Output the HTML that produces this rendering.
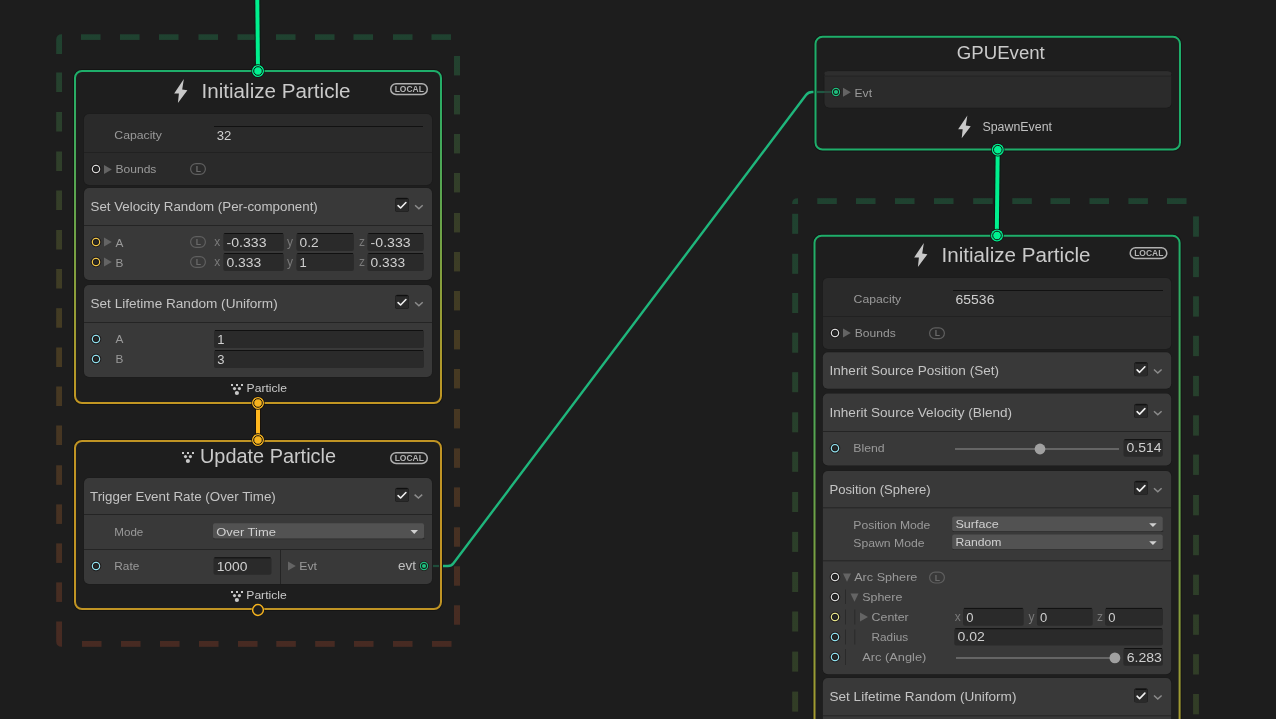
<!DOCTYPE html>
<html><head><meta charset="utf-8"><style>
html,body{margin:0;padding:0;width:1276px;height:719px;overflow:hidden;background:#1d1d1d;font-family:"Liberation Sans",sans-serif;}
</style></head><body>
<svg width="1276" height="719" viewBox="0 0 1276 719" style="position:absolute;left:0;top:0;will-change:transform" font-family="Liberation Sans, sans-serif"><defs><linearGradient id="sysL" gradientUnits="userSpaceOnUse" x1="0" y1="34" x2="0" y2="647">
<stop offset="0" stop-color="#1f4230"/><stop offset="0.5" stop-color="#463b22"/><stop offset="1" stop-color="#472a22"/></linearGradient><linearGradient id="sysR" gradientUnits="userSpaceOnUse" x1="0" y1="198" x2="0" y2="712">
<stop offset="0" stop-color="#1f4230"/><stop offset="1" stop-color="#323d26"/></linearGradient><linearGradient id="brdL" gradientUnits="userSpaceOnUse" x1="0" y1="71" x2="0" y2="403">
<stop offset="0" stop-color="#1eae6a"/><stop offset="1" stop-color="#c29622"/></linearGradient><linearGradient id="brdR" gradientUnits="userSpaceOnUse" x1="0" y1="235" x2="0" y2="822">
<stop offset="0" stop-color="#1eae6a"/><stop offset="1" stop-color="#c29622"/></linearGradient></defs><rect width="1276" height="719" fill="#1d1d1d"/><rect x="81" y="34.3" width="19.5" height="5.6" rx="0" fill="url(#sysL)" />
<rect x="120" y="34.3" width="19.5" height="5.6" rx="0" fill="url(#sysL)" />
<rect x="159" y="34.3" width="19.5" height="5.6" rx="0" fill="url(#sysL)" />
<rect x="198.5" y="34.3" width="19.5" height="5.6" rx="0" fill="url(#sysL)" />
<rect x="237.5" y="34.3" width="19.5" height="5.6" rx="0" fill="url(#sysL)" />
<rect x="276" y="34.3" width="19.5" height="5.6" rx="0" fill="url(#sysL)" />
<rect x="315" y="34.3" width="19.5" height="5.6" rx="0" fill="url(#sysL)" />
<rect x="353.5" y="34.3" width="19.5" height="5.6" rx="0" fill="url(#sysL)" />
<rect x="393" y="34.3" width="19.5" height="5.6" rx="0" fill="url(#sysL)" />
<rect x="431.5" y="34.3" width="19.5" height="5.6" rx="0" fill="url(#sysL)" />
<rect x="454" y="56" width="6" height="19.4" rx="0" fill="url(#sysL)" />
<rect x="454" y="95" width="6" height="19.4" rx="0" fill="url(#sysL)" />
<rect x="454" y="134" width="6" height="19.4" rx="0" fill="url(#sysL)" />
<rect x="454" y="173" width="6" height="19.4" rx="0" fill="url(#sysL)" />
<rect x="454" y="213" width="6" height="19.4" rx="0" fill="url(#sysL)" />
<rect x="454" y="252" width="6" height="19.4" rx="0" fill="url(#sysL)" />
<rect x="454" y="291" width="6" height="19.4" rx="0" fill="url(#sysL)" />
<rect x="454" y="330" width="6" height="19.4" rx="0" fill="url(#sysL)" />
<rect x="454" y="369" width="6" height="19.4" rx="0" fill="url(#sysL)" />
<rect x="454" y="409" width="6" height="19.4" rx="0" fill="url(#sysL)" />
<rect x="454" y="448.4" width="6" height="19.4" rx="0" fill="url(#sysL)" />
<rect x="454" y="487.4" width="6" height="19.4" rx="0" fill="url(#sysL)" />
<rect x="454" y="527.3" width="6" height="19.4" rx="0" fill="url(#sysL)" />
<rect x="454" y="566.3" width="6" height="19.4" rx="0" fill="url(#sysL)" />
<rect x="454" y="605.3" width="6" height="19.4" rx="0" fill="url(#sysL)" />
<rect x="82" y="641" width="19.5" height="5.8" rx="0" fill="url(#sysL)" />
<rect x="121" y="641" width="19.5" height="5.8" rx="0" fill="url(#sysL)" />
<rect x="160" y="641" width="19.5" height="5.8" rx="0" fill="url(#sysL)" />
<rect x="199" y="641" width="19.5" height="5.8" rx="0" fill="url(#sysL)" />
<rect x="238" y="641" width="19.5" height="5.8" rx="0" fill="url(#sysL)" />
<rect x="276.3" y="641" width="19.5" height="5.8" rx="0" fill="url(#sysL)" />
<rect x="315.2" y="641" width="19.5" height="5.8" rx="0" fill="url(#sysL)" />
<rect x="354" y="641" width="19.5" height="5.8" rx="0" fill="url(#sysL)" />
<rect x="393" y="641" width="19.5" height="5.8" rx="0" fill="url(#sysL)" />
<rect x="432" y="641" width="19.5" height="5.8" rx="0" fill="url(#sysL)" />
<rect x="56.2" y="72.5" width="5.8" height="19.5" rx="0" fill="url(#sysL)" />
<rect x="56.2" y="112" width="5.8" height="19.5" rx="0" fill="url(#sysL)" />
<rect x="56.2" y="151.5" width="5.8" height="19.5" rx="0" fill="url(#sysL)" />
<rect x="56.2" y="190.5" width="5.8" height="19.5" rx="0" fill="url(#sysL)" />
<rect x="56.2" y="230" width="5.8" height="19.5" rx="0" fill="url(#sysL)" />
<rect x="56.2" y="269" width="5.8" height="19.5" rx="0" fill="url(#sysL)" />
<rect x="56.2" y="308.2" width="5.8" height="19.5" rx="0" fill="url(#sysL)" />
<rect x="56.2" y="347.5" width="5.8" height="19.5" rx="0" fill="url(#sysL)" />
<rect x="56.2" y="386.5" width="5.8" height="19.5" rx="0" fill="url(#sysL)" />
<rect x="56.2" y="425.5" width="5.8" height="19.5" rx="0" fill="url(#sysL)" />
<rect x="56.2" y="465.3" width="5.8" height="19.5" rx="0" fill="url(#sysL)" />
<rect x="56.2" y="504.4" width="5.8" height="19.5" rx="0" fill="url(#sysL)" />
<rect x="56.2" y="543.4" width="5.8" height="19.5" rx="0" fill="url(#sysL)" />
<rect x="56.2" y="582.4" width="5.8" height="19.5" rx="0" fill="url(#sysL)" />
<path d="M56.2,54 L56.2,40 Q56.2,34.3 62,34.3 L62,54 Z" fill="url(#sysL)" stroke="none" stroke-width="1" />
<path d="M56.2,621.5 L56.2,641 Q56.2,646.8 62,646.8 L62,621.5 Z" fill="url(#sysL)" stroke="none" stroke-width="1" />
<rect x="817.3" y="198.2" width="19.5" height="5.8" rx="0" fill="url(#sysR)" />
<rect x="856" y="198.2" width="19.5" height="5.8" rx="0" fill="url(#sysR)" />
<rect x="895" y="198.2" width="19.5" height="5.8" rx="0" fill="url(#sysR)" />
<rect x="934" y="198.2" width="19.5" height="5.8" rx="0" fill="url(#sysR)" />
<rect x="973.2" y="198.2" width="19.5" height="5.8" rx="0" fill="url(#sysR)" />
<rect x="1012.3" y="198.2" width="19.5" height="5.8" rx="0" fill="url(#sysR)" />
<rect x="1050.5" y="198.2" width="19.5" height="5.8" rx="0" fill="url(#sysR)" />
<rect x="1089.5" y="198.2" width="19.5" height="5.8" rx="0" fill="url(#sysR)" />
<rect x="1128.4" y="198.2" width="19.5" height="5.8" rx="0" fill="url(#sysR)" />
<rect x="1167" y="198.2" width="19.5" height="5.8" rx="0" fill="url(#sysR)" />
<path d="M792.2,204 L792.2,203 Q792.2,198.2 798,198.2 L798,204 Z" fill="url(#sysR)" stroke="none" stroke-width="1" />
<rect x="792.2" y="213.8" width="5.9" height="20" rx="0" fill="url(#sysR)" />
<rect x="792.2" y="253.8" width="5.9" height="20" rx="0" fill="url(#sysR)" />
<rect x="792.2" y="293" width="5.9" height="20" rx="0" fill="url(#sysR)" />
<rect x="792.2" y="332.7" width="5.9" height="20" rx="0" fill="url(#sysR)" />
<rect x="792.2" y="372.2" width="5.9" height="20" rx="0" fill="url(#sysR)" />
<rect x="792.2" y="412.3" width="5.9" height="20" rx="0" fill="url(#sysR)" />
<rect x="792.2" y="451.8" width="5.9" height="20" rx="0" fill="url(#sysR)" />
<rect x="792.2" y="492" width="5.9" height="20" rx="0" fill="url(#sysR)" />
<rect x="792.2" y="531.9" width="5.9" height="20" rx="0" fill="url(#sysR)" />
<rect x="792.2" y="572" width="5.9" height="20" rx="0" fill="url(#sysR)" />
<rect x="792.2" y="611.5" width="5.9" height="20" rx="0" fill="url(#sysR)" />
<rect x="792.2" y="651.6" width="5.9" height="20" rx="0" fill="url(#sysR)" />
<rect x="792.2" y="691.6" width="5.9" height="20" rx="0" fill="url(#sysR)" />
<rect x="1193.1" y="216.4" width="5.8" height="20.3" rx="0" fill="url(#sysR)" />
<rect x="1193.1" y="256.8" width="5.8" height="20.3" rx="0" fill="url(#sysR)" />
<rect x="1193.1" y="296.3" width="5.8" height="20.3" rx="0" fill="url(#sysR)" />
<rect x="1193.1" y="335.8" width="5.8" height="20.3" rx="0" fill="url(#sysR)" />
<rect x="1193.1" y="375.9" width="5.8" height="20.3" rx="0" fill="url(#sysR)" />
<rect x="1193.1" y="415.3" width="5.8" height="20.3" rx="0" fill="url(#sysR)" />
<rect x="1193.1" y="454.6" width="5.8" height="20.3" rx="0" fill="url(#sysR)" />
<rect x="1193.1" y="495" width="5.8" height="20.3" rx="0" fill="url(#sysR)" />
<rect x="1193.1" y="534.9" width="5.8" height="20.3" rx="0" fill="url(#sysR)" />
<rect x="1193.1" y="574.7" width="5.8" height="20.3" rx="0" fill="url(#sysR)" />
<rect x="1193.1" y="614.5" width="5.8" height="20.3" rx="0" fill="url(#sysR)" />
<rect x="1193.1" y="654.2" width="5.8" height="20.3" rx="0" fill="url(#sysR)" />
<rect x="1193.1" y="694" width="5.8" height="20.3" rx="0" fill="url(#sysR)" />
<path d="M440,566 L448,566 Q451.5,566 453.5,563.2 L806,95 Q808.3,92 812,92 L816,92" fill="none" stroke="#1fb67c" stroke-width="2.4" />
<line x1="257.3" y1="0" x2="258" y2="71" stroke="#0a1a12" stroke-width="6" />
<line x1="257.3" y1="0" x2="258" y2="71" stroke="#00f08e" stroke-width="4" />
<line x1="997.7" y1="150" x2="996.8" y2="235" stroke="#0a1a12" stroke-width="6" />
<line x1="997.7" y1="150" x2="996.8" y2="235" stroke="#00f08e" stroke-width="4" />
<line x1="258" y1="403" x2="258" y2="440" stroke="#1a1208" stroke-width="6" />
<line x1="258" y1="403" x2="258" y2="440" stroke="#ffb71e" stroke-width="4" />
<rect x="75" y="71" width="366" height="332" rx="7" fill="#1e1e1e" stroke="#141414" stroke-width="4"/>
<rect x="75" y="71" width="366" height="332" rx="7" fill="#1e1e1e" stroke="url(#brdL)" stroke-width="2"/>
<polygon points="183.85,79.0 174.15,93.4 178.9,93.6 177.9,103.0 187.4,90.3 182.2,89.6" fill="#c8c8c8"/>
<text x="201.5" y="98.4" font-size="19.3" fill="#cacaca" textLength="149" lengthAdjust="spacingAndGlyphs" text-anchor="start" >Initialize Particle</text>
<rect x="390.75" y="83.75" width="36.5" height="10.7" rx="5.3" fill="none" stroke="#b0b0b0" stroke-width="1.5"/>
<text x="394.7" y="92.0" font-size="8.3" fill="#b4b4b4" font-weight="bold" textLength="29.2" lengthAdjust="spacingAndGlyphs" text-anchor="start" >LOCAL</text>
<rect x="83.5" y="113.5" width="349" height="72" rx="5.5" fill="#1a1a1a"/>
<rect x="84" y="114" width="348" height="71" rx="5" fill="#2a2a2a" />
<line x1="84" y1="152.5" x2="432" y2="152.5" stroke="#212121" stroke-width="1" />
<text x="114.3" y="139.2" font-size="11.8" fill="#9a9a9a" textLength="47.6" lengthAdjust="spacingAndGlyphs" text-anchor="start" >Capacity</text>
<rect x="214" y="126" width="209" height="1" rx="0" fill="#111111" />
<text x="216.8" y="139.6" font-size="13" fill="#d0d0d0" textLength="14.6" lengthAdjust="spacingAndGlyphs" text-anchor="start" >32</text>
<circle cx="96" cy="169" r="4.8" fill="none" stroke="#161212" stroke-width="0.9"/>
<circle cx="96" cy="169" r="3.6" fill="#282828" stroke="#d8d8d8" stroke-width="1.3"/>
<circle cx="96" cy="169" r="2.55" fill="none" stroke="#141414" stroke-width="0.8"/>
<polygon points="104,165 111.8,169.5 104,174" fill="#646464"/>
<text x="115.5" y="173" font-size="11.8" fill="#9a9a9a" textLength="40.9" lengthAdjust="spacingAndGlyphs" text-anchor="start" >Bounds</text>
<rect x="190.6" y="163.6" width="14.8" height="10.8" rx="5.4" fill="none" stroke="#5f5f5f" stroke-width="1.2"/>
<text x="198.3" y="172.0" font-size="8.6" fill="#6a6a6a" font-weight="bold" text-anchor="middle" >L</text>
<rect x="83.5" y="187.5" width="349" height="93" rx="5.5" fill="#1a1a1a"/>
<rect x="84" y="188" width="348" height="92" rx="5" fill="#393939" />
<line x1="84" y1="225.5" x2="432" y2="225.5" stroke="#242424" stroke-width="1" />
<text x="90.5" y="211.2" font-size="13" fill="#c4c4c4" textLength="227.3" lengthAdjust="spacingAndGlyphs" text-anchor="start" >Set Velocity Random (Per-component)</text>
<rect x="395.0" y="197.7" width="14" height="14.2" rx="2.5" fill="#1c1c1c" />
<rect x="395.5" y="198.2" width="13" height="13.4" rx="2" fill="#2a2a2a" />
<rect x="396.5" y="198.2" width="11" height="1" rx="0" fill="#0c0c0c" />
<path d="M398.1,205.6 L400.6,208.0 L405.9,202.5" fill="none" stroke="#f0f0f0" stroke-width="1.6" stroke-linecap="round" stroke-linejoin="round"/>
<path d="M415.1,205.2 L418.90000000000003,208.7 L422.70000000000005,205.2" fill="none" stroke="#8c8c8c" stroke-width="1.5" />
<circle cx="96" cy="242" r="4.8" fill="none" stroke="#161212" stroke-width="0.9"/>
<circle cx="96" cy="242" r="3.6" fill="#282828" stroke="#f2c544" stroke-width="1.3"/>
<circle cx="96" cy="242" r="2.55" fill="none" stroke="#141414" stroke-width="0.8"/>
<polygon points="104,237.5 111.8,242.0 104,246.5" fill="#646464"/>
<text x="115.5" y="246.5" font-size="11.8" fill="#9a9a9a" text-anchor="start" >A</text>
<rect x="190.6" y="236.6" width="14.8" height="10.8" rx="5.4" fill="none" stroke="#5f5f5f" stroke-width="1.2"/>
<text x="198.3" y="245.0" font-size="8.6" fill="#6a6a6a" font-weight="bold" text-anchor="middle" >L</text>
<text x="214.3" y="246.2" font-size="12" fill="#7a7a7a" text-anchor="start" >x</text>
<rect x="223.3" y="233" width="60.5" height="18" rx="2" fill="#2a2a2a" />
<rect x="224.3" y="233" width="58.5" height="1" rx="0" fill="#101010" />
<text x="226.5" y="246.7" font-size="13" fill="#d0d0d0" textLength="40" lengthAdjust="spacingAndGlyphs" text-anchor="start" >-0.333</text>
<text x="287" y="246.2" font-size="12" fill="#7a7a7a" text-anchor="start" >y</text>
<rect x="296.4" y="233" width="57.5" height="18" rx="2" fill="#2a2a2a" />
<rect x="297.4" y="233" width="55.5" height="1" rx="0" fill="#101010" />
<text x="299.59999999999997" y="246.7" font-size="13" fill="#d0d0d0" textLength="19.1" lengthAdjust="spacingAndGlyphs" text-anchor="start" >0.2</text>
<text x="359" y="246.2" font-size="12" fill="#7a7a7a" text-anchor="start" >z</text>
<rect x="367.4" y="233" width="56.5" height="18" rx="2" fill="#2a2a2a" />
<rect x="368.4" y="233" width="54.5" height="1" rx="0" fill="#101010" />
<text x="370.59999999999997" y="246.7" font-size="13" fill="#d0d0d0" textLength="40" lengthAdjust="spacingAndGlyphs" text-anchor="start" >-0.333</text>
<circle cx="96" cy="262" r="4.8" fill="none" stroke="#161212" stroke-width="0.9"/>
<circle cx="96" cy="262" r="3.6" fill="#282828" stroke="#f2c544" stroke-width="1.3"/>
<circle cx="96" cy="262" r="2.55" fill="none" stroke="#141414" stroke-width="0.8"/>
<polygon points="104,257.5 111.8,262.0 104,266.5" fill="#646464"/>
<text x="115.5" y="266.5" font-size="11.8" fill="#9a9a9a" text-anchor="start" >B</text>
<rect x="190.6" y="256.6" width="14.8" height="10.8" rx="5.4" fill="none" stroke="#5f5f5f" stroke-width="1.2"/>
<text x="198.3" y="265.0" font-size="8.6" fill="#6a6a6a" font-weight="bold" text-anchor="middle" >L</text>
<text x="214.3" y="266.2" font-size="12" fill="#7a7a7a" text-anchor="start" >x</text>
<rect x="223.3" y="253" width="60.5" height="18" rx="2" fill="#2a2a2a" />
<rect x="224.3" y="253" width="58.5" height="1" rx="0" fill="#101010" />
<text x="226.5" y="266.7" font-size="13" fill="#d0d0d0" textLength="34.8" lengthAdjust="spacingAndGlyphs" text-anchor="start" >0.333</text>
<text x="287" y="266.2" font-size="12" fill="#7a7a7a" text-anchor="start" >y</text>
<rect x="296.4" y="253" width="57.5" height="18" rx="2" fill="#2a2a2a" />
<rect x="297.4" y="253" width="55.5" height="1" rx="0" fill="#101010" />
<text x="299.59999999999997" y="266.7" font-size="13" fill="#d0d0d0" text-anchor="start" >1</text>
<text x="359" y="266.2" font-size="12" fill="#7a7a7a" text-anchor="start" >z</text>
<rect x="367.4" y="253" width="56.5" height="18" rx="2" fill="#2a2a2a" />
<rect x="368.4" y="253" width="54.5" height="1" rx="0" fill="#101010" />
<text x="370.59999999999997" y="266.7" font-size="13" fill="#d0d0d0" textLength="34.5" lengthAdjust="spacingAndGlyphs" text-anchor="start" >0.333</text>
<rect x="83.5" y="284.5" width="349" height="93" rx="5.5" fill="#1a1a1a"/>
<rect x="84" y="285" width="348" height="92" rx="5" fill="#393939" />
<line x1="84" y1="322.5" x2="432" y2="322.5" stroke="#242424" stroke-width="1" />
<text x="90.5" y="308.2" font-size="13" fill="#c4c4c4" textLength="187.2" lengthAdjust="spacingAndGlyphs" text-anchor="start" >Set Lifetime Random (Uniform)</text>
<rect x="395.0" y="294.7" width="14" height="14.2" rx="2.5" fill="#1c1c1c" />
<rect x="395.5" y="295.2" width="13" height="13.4" rx="2" fill="#2a2a2a" />
<rect x="396.5" y="295.2" width="11" height="1" rx="0" fill="#0c0c0c" />
<path d="M398.1,302.59999999999997 L400.6,305.0 L405.9,299.5" fill="none" stroke="#f0f0f0" stroke-width="1.6" stroke-linecap="round" stroke-linejoin="round"/>
<path d="M415.1,302.2 L418.90000000000003,305.7 L422.70000000000005,302.2" fill="none" stroke="#8c8c8c" stroke-width="1.5" />
<circle cx="96" cy="339" r="4.8" fill="none" stroke="#161212" stroke-width="0.9"/>
<circle cx="96" cy="339" r="3.6" fill="#282828" stroke="#8fe0ee" stroke-width="1.3"/>
<circle cx="96" cy="339" r="2.55" fill="none" stroke="#141414" stroke-width="0.8"/>
<text x="115.5" y="343.2" font-size="11.8" fill="#9a9a9a" text-anchor="start" >A</text>
<rect x="214" y="330" width="210" height="18" rx="2" fill="#2a2a2a" />
<rect x="215" y="330" width="208" height="1" rx="0" fill="#101010" />
<text x="217.2" y="343.7" font-size="13" fill="#d0d0d0" text-anchor="start" >1</text>
<circle cx="96" cy="359" r="4.8" fill="none" stroke="#161212" stroke-width="0.9"/>
<circle cx="96" cy="359" r="3.6" fill="#282828" stroke="#8fe0ee" stroke-width="1.3"/>
<circle cx="96" cy="359" r="2.55" fill="none" stroke="#141414" stroke-width="0.8"/>
<text x="115.5" y="363.2" font-size="11.8" fill="#9a9a9a" text-anchor="start" >B</text>
<rect x="214" y="350" width="210" height="18" rx="2" fill="#2a2a2a" />
<rect x="215" y="350" width="208" height="1" rx="0" fill="#101010" />
<text x="217.2" y="363.7" font-size="13" fill="#d0d0d0" text-anchor="start" >3</text>
<rect x="231.0" y="384" width="2" height="2" rx="0" fill="#c8c8c8" />
<rect x="236.0" y="384" width="2" height="2" rx="0" fill="#c8c8c8" />
<rect x="241.0" y="384" width="2" height="2" rx="0" fill="#c8c8c8" />
<circle cx="234.5" cy="388.6" r="1.6" fill="#c8c8c8" stroke="none" stroke-width="1"/>
<circle cx="239.4" cy="388.6" r="1.6" fill="#c8c8c8" stroke="none" stroke-width="1"/>
<circle cx="236.9" cy="393" r="2.1" fill="#c8c8c8" stroke="none" stroke-width="1"/>
<text x="246.6" y="392" font-size="11.8" fill="#cacaca" textLength="40.4" lengthAdjust="spacingAndGlyphs" text-anchor="start" >Particle</text>
<circle cx="258" cy="71" r="6.7" fill="#121010" stroke="none" stroke-width="1"/>
<circle cx="258" cy="71" r="6.0" fill="#00f290" stroke="none" stroke-width="1"/>
<circle cx="258" cy="71" r="4.3" fill="none" stroke="#121010" stroke-width="1.0"/>
<circle cx="258" cy="403" r="6.7" fill="#121010" stroke="none" stroke-width="1"/>
<circle cx="258" cy="403" r="6.0" fill="#f5b31f" stroke="none" stroke-width="1"/>
<circle cx="258" cy="403" r="4.3" fill="none" stroke="#121010" stroke-width="1.0"/>
<rect x="75" y="441" width="366" height="168" rx="7" fill="#1e1e1e" stroke="#141414" stroke-width="4"/>
<rect x="75" y="441" width="366" height="168" rx="7" fill="#1e1e1e" stroke="#c09424" stroke-width="2"/>
<rect x="182.0" y="452" width="2" height="2" rx="0" fill="#c8c8c8" />
<rect x="187.0" y="452" width="2" height="2" rx="0" fill="#c8c8c8" />
<rect x="192.0" y="452" width="2" height="2" rx="0" fill="#c8c8c8" />
<circle cx="185.5" cy="456.6" r="1.6" fill="#c8c8c8" stroke="none" stroke-width="1"/>
<circle cx="190.4" cy="456.6" r="1.6" fill="#c8c8c8" stroke="none" stroke-width="1"/>
<circle cx="187.9" cy="461" r="2.1" fill="#c8c8c8" stroke="none" stroke-width="1"/>
<text x="200" y="463.3" font-size="19.3" fill="#cacaca" textLength="136" lengthAdjust="spacingAndGlyphs" text-anchor="start" >Update Particle</text>
<rect x="390.75" y="452.75" width="36.5" height="10.7" rx="5.3" fill="none" stroke="#b0b0b0" stroke-width="1.5"/>
<text x="394.7" y="461.0" font-size="8.3" fill="#b4b4b4" font-weight="bold" textLength="29.2" lengthAdjust="spacingAndGlyphs" text-anchor="start" >LOCAL</text>
<rect x="83.5" y="477.5" width="349" height="107" rx="5.5" fill="#1a1a1a"/>
<rect x="84" y="478" width="348" height="106" rx="5" fill="#393939" />
<line x1="84" y1="514.5" x2="432" y2="514.5" stroke="#242424" stroke-width="1" />
<line x1="84" y1="549.5" x2="432" y2="549.5" stroke="#242424" stroke-width="1" />
<text x="90" y="501" font-size="13" fill="#c4c4c4" textLength="185.8" lengthAdjust="spacingAndGlyphs" text-anchor="start" >Trigger Event Rate (Over Time)</text>
<rect x="395.0" y="487.7" width="14" height="14.2" rx="2.5" fill="#1c1c1c" />
<rect x="395.5" y="488.2" width="13" height="13.4" rx="2" fill="#2a2a2a" />
<rect x="396.5" y="488.2" width="11" height="1" rx="0" fill="#0c0c0c" />
<path d="M398.1,495.59999999999997 L400.6,498.0 L405.9,492.5" fill="none" stroke="#f0f0f0" stroke-width="1.6" stroke-linecap="round" stroke-linejoin="round"/>
<path d="M414.6,494.6 L418.40000000000003,498.1 L422.20000000000005,494.6" fill="none" stroke="#8c8c8c" stroke-width="1.5" />
<text x="114.3" y="536" font-size="11.8" fill="#9a9a9a" textLength="29" lengthAdjust="spacingAndGlyphs" text-anchor="start" >Mode</text>
<rect x="213.5" y="538.0" width="211" height="1.2" rx="0" fill="#2a2a2a" />
<rect x="213" y="523.3" width="211" height="15.2" rx="2" fill="#525252" />
<text x="216.2" y="535.5" font-size="11.6" fill="#d0d0d0" textLength="59.7" lengthAdjust="spacingAndGlyphs" text-anchor="start" >Over Time</text>
<polygon points="410.5,530.0999999999999 418,530.0999999999999 414.25,533.9" fill="#d0d0d0"/>
<circle cx="96" cy="566" r="4.8" fill="none" stroke="#161212" stroke-width="0.9"/>
<circle cx="96" cy="566" r="3.6" fill="#282828" stroke="#8fe0ee" stroke-width="1.3"/>
<circle cx="96" cy="566" r="2.55" fill="none" stroke="#141414" stroke-width="0.8"/>
<text x="114.3" y="570" font-size="11.8" fill="#9a9a9a" textLength="25" lengthAdjust="spacingAndGlyphs" text-anchor="start" >Rate</text>
<rect x="213.5" y="557.3" width="58" height="17.5" rx="2" fill="#2a2a2a" />
<rect x="214.5" y="557.3" width="56" height="1" rx="0" fill="#101010" />
<text x="216.7" y="570.5" font-size="13" fill="#d0d0d0" textLength="30.75" lengthAdjust="spacingAndGlyphs" text-anchor="start" >1000</text>
<line x1="280.5" y1="550" x2="280.5" y2="584" stroke="#242424" stroke-width="1" />
<polygon points="288,561.5 295.8,566.0 288,570.5" fill="#646464"/>
<text x="299.2" y="570" font-size="11.8" fill="#9a9a9a" textLength="17.8" lengthAdjust="spacingAndGlyphs" text-anchor="start" >Evt</text>
<text x="398" y="570" font-size="12" fill="#c0c0c0" textLength="18" lengthAdjust="spacingAndGlyphs" text-anchor="start" >evt</text>
<circle cx="424" cy="566" r="4.6" fill="none" stroke="#1a1212" stroke-width="0.8"/>
<circle cx="424" cy="566" r="3.6" fill="#141414" stroke="#1fbf7e" stroke-width="1.2"/>
<circle cx="424" cy="566" r="2.1" fill="#1fbf7e" stroke="none" stroke-width="1"/>
<rect x="231.0" y="591" width="2" height="2" rx="0" fill="#c8c8c8" />
<rect x="236.0" y="591" width="2" height="2" rx="0" fill="#c8c8c8" />
<rect x="241.0" y="591" width="2" height="2" rx="0" fill="#c8c8c8" />
<circle cx="234.5" cy="595.6" r="1.6" fill="#c8c8c8" stroke="none" stroke-width="1"/>
<circle cx="239.4" cy="595.6" r="1.6" fill="#c8c8c8" stroke="none" stroke-width="1"/>
<circle cx="236.9" cy="600" r="2.1" fill="#c8c8c8" stroke="none" stroke-width="1"/>
<text x="246.3" y="599" font-size="11.8" fill="#cacaca" textLength="40.4" lengthAdjust="spacingAndGlyphs" text-anchor="start" >Particle</text>
<circle cx="258" cy="440" r="6.7" fill="#121010" stroke="none" stroke-width="1"/>
<circle cx="258" cy="440" r="6.0" fill="#f5b31f" stroke="none" stroke-width="1"/>
<circle cx="258" cy="440" r="4.3" fill="none" stroke="#121010" stroke-width="1.0"/>
<circle cx="258" cy="610" r="6.3" fill="#101010" stroke="none" stroke-width="1"/>
<circle cx="258" cy="610" r="5.4" fill="#1e1e1e" stroke="#f5b31f" stroke-width="1.5"/>
<rect x="815.5" y="36.8" width="364.5" height="112.8" rx="7" fill="#1e1e1e" stroke="#141414" stroke-width="4"/>
<rect x="815.5" y="36.8" width="364.5" height="112.8" rx="7" fill="#1e1e1e" stroke="#1eae6a" stroke-width="2"/>
<text x="956.8" y="58.9" font-size="18" fill="#cacaca" textLength="88" lengthAdjust="spacingAndGlyphs" text-anchor="start" >GPUEvent</text>
<rect x="823.9" y="70.7" width="348" height="37.6" rx="5.5" fill="#1a1a1a"/>
<rect x="824.4" y="71.2" width="347" height="36.6" rx="5" fill="#2b2b2b" />
<rect x="824.4" y="71.2" width="347" height="4.5" rx="4" fill="#2e2e2e" />
<rect x="824.4" y="75.7" width="347" height="1" rx="0" fill="#262626" />
<circle cx="836" cy="92" r="4.6" fill="none" stroke="#1a1212" stroke-width="0.8"/>
<circle cx="836" cy="92" r="3.6" fill="#141414" stroke="#1fbf7e" stroke-width="1.2"/>
<circle cx="836" cy="92" r="2.1" fill="#1fbf7e" stroke="none" stroke-width="1"/>
<polygon points="843,87.7 850.8,92.2 843,96.7" fill="#646464"/>
<text x="854.5" y="96.6" font-size="11.8" fill="#9a9a9a" textLength="17.5" lengthAdjust="spacingAndGlyphs" text-anchor="start" >Evt</text>
<polygon points="967.3575,115.5 958.1425,129.18 962.655,129.37 961.705,138.3 970.73,126.235 965.79,125.57" fill="#c8c8c8"/>
<text x="982.4" y="131.3" font-size="12" fill="#c0c0c0" textLength="69.6" lengthAdjust="spacingAndGlyphs" text-anchor="start" >SpawnEvent</text>
<circle cx="997.8" cy="149.7" r="6.7" fill="#121010" stroke="none" stroke-width="1"/>
<circle cx="997.8" cy="149.7" r="6.0" fill="#00f290" stroke="none" stroke-width="1"/>
<circle cx="997.8" cy="149.7" r="4.3" fill="none" stroke="#121010" stroke-width="1.0"/>
<rect x="814.5" y="235.8" width="365.1" height="700" rx="7" fill="#1e1e1e" stroke="#141414" stroke-width="4"/>
<rect x="814.5" y="235.8" width="365.1" height="700" rx="7" fill="#1e1e1e" stroke="url(#brdR)" stroke-width="2"/>
<polygon points="923.85,243.0 914.15,257.4 918.9,257.6 917.9,267.0 927.4,254.3 922.2,253.6" fill="#c8c8c8"/>
<text x="941.5" y="262" font-size="19.3" fill="#cacaca" textLength="149" lengthAdjust="spacingAndGlyphs" text-anchor="start" >Initialize Particle</text>
<rect x="1130.25" y="247.75" width="36.5" height="10.7" rx="5.3" fill="none" stroke="#b0b0b0" stroke-width="1.5"/>
<text x="1134.2" y="256.0" font-size="8.3" fill="#b4b4b4" font-weight="bold" textLength="29.2" lengthAdjust="spacingAndGlyphs" text-anchor="start" >LOCAL</text>
<circle cx="997" cy="235.5" r="6.7" fill="#121010" stroke="none" stroke-width="1"/>
<circle cx="997" cy="235.5" r="6.0" fill="#00f290" stroke="none" stroke-width="1"/>
<circle cx="997" cy="235.5" r="4.3" fill="none" stroke="#121010" stroke-width="1.0"/>
<rect x="822.3" y="277.5" width="349.4" height="72" rx="5.5" fill="#1a1a1a"/>
<rect x="822.8" y="278" width="348.4" height="71" rx="5" fill="#2a2a2a" />
<line x1="822.8" y1="316.5" x2="1171.5" y2="316.5" stroke="#212121" stroke-width="1" />
<text x="853.6" y="303.4" font-size="11.8" fill="#9a9a9a" textLength="47.6" lengthAdjust="spacingAndGlyphs" text-anchor="start" >Capacity</text>
<rect x="953" y="290" width="210" height="1" rx="0" fill="#111111" />
<text x="955.6" y="303.6" font-size="13" fill="#d0d0d0" textLength="38.8" lengthAdjust="spacingAndGlyphs" text-anchor="start" >65536</text>
<circle cx="835" cy="333" r="4.8" fill="none" stroke="#161212" stroke-width="0.9"/>
<circle cx="835" cy="333" r="3.6" fill="#282828" stroke="#d8d8d8" stroke-width="1.3"/>
<circle cx="835" cy="333" r="2.55" fill="none" stroke="#141414" stroke-width="0.8"/>
<polygon points="843,328.5 850.8,333.0 843,337.5" fill="#646464"/>
<text x="854.8" y="337" font-size="11.8" fill="#9a9a9a" textLength="40.9" lengthAdjust="spacingAndGlyphs" text-anchor="start" >Bounds</text>
<rect x="929.6" y="327.90000000000003" width="14.8" height="10.8" rx="5.4" fill="none" stroke="#5f5f5f" stroke-width="1.2"/>
<text x="937.3" y="336.3" font-size="8.6" fill="#6a6a6a" font-weight="bold" text-anchor="middle" >L</text>
<rect x="822.3" y="351.8" width="349.4" height="37.5" rx="5.5" fill="#1a1a1a"/>
<rect x="822.8" y="352.3" width="348.4" height="36.5" rx="5" fill="#393939" />
<text x="829.5" y="375" font-size="13" fill="#c4c4c4" textLength="169.5" lengthAdjust="spacingAndGlyphs" text-anchor="start" >Inherit Source Position (Set)</text>
<rect x="1134.0" y="362.0" width="14" height="14.2" rx="2.5" fill="#1c1c1c" />
<rect x="1134.5" y="362.5" width="13" height="13.4" rx="2" fill="#2a2a2a" />
<rect x="1135.5" y="362.5" width="11" height="1" rx="0" fill="#0c0c0c" />
<path d="M1137.1,369.9 L1139.6,372.3 L1144.9,366.8" fill="none" stroke="#f0f0f0" stroke-width="1.6" stroke-linecap="round" stroke-linejoin="round"/>
<path d="M1154,369.5 L1157.8,373.0 L1161.6,369.5" fill="none" stroke="#8c8c8c" stroke-width="1.5" />
<rect x="822.3" y="393.0" width="349.4" height="73" rx="5.5" fill="#1a1a1a"/>
<rect x="822.8" y="393.5" width="348.4" height="72" rx="5" fill="#393939" />
<line x1="822.8" y1="431.5" x2="1171.5" y2="431.5" stroke="#242424" stroke-width="1" />
<text x="829.5" y="417" font-size="13" fill="#c4c4c4" textLength="182.6" lengthAdjust="spacingAndGlyphs" text-anchor="start" >Inherit Source Velocity (Blend)</text>
<rect x="1134.0" y="403.8" width="14" height="14.2" rx="2.5" fill="#1c1c1c" />
<rect x="1134.5" y="404.3" width="13" height="13.4" rx="2" fill="#2a2a2a" />
<rect x="1135.5" y="404.3" width="11" height="1" rx="0" fill="#0c0c0c" />
<path d="M1137.1,411.7 L1139.6,414.1 L1144.9,408.6" fill="none" stroke="#f0f0f0" stroke-width="1.6" stroke-linecap="round" stroke-linejoin="round"/>
<path d="M1154,411.2 L1157.8,414.7 L1161.6,411.2" fill="none" stroke="#8c8c8c" stroke-width="1.5" />
<circle cx="835" cy="448.2" r="4.8" fill="none" stroke="#161212" stroke-width="0.9"/>
<circle cx="835" cy="448.2" r="3.6" fill="#282828" stroke="#8fe0ee" stroke-width="1.3"/>
<circle cx="835" cy="448.2" r="2.55" fill="none" stroke="#141414" stroke-width="0.8"/>
<text x="853.3" y="452.2" font-size="11.8" fill="#9a9a9a" textLength="31.4" lengthAdjust="spacingAndGlyphs" text-anchor="start" >Blend</text>
<line x1="955" y1="449" x2="1119" y2="449" stroke="#656565" stroke-width="2" />
<circle cx="1040" cy="449" r="5.4" fill="#a0a0a0" stroke="none" stroke-width="1"/>
<rect x="1123.5" y="439.2" width="39.3" height="17.5" rx="2" fill="#2a2a2a" />
<rect x="1124.5" y="439.2" width="37.3" height="1" rx="0" fill="#101010" />
<text x="1126.6" y="452.4" font-size="13" fill="#d0d0d0" textLength="35" lengthAdjust="spacingAndGlyphs" text-anchor="start" >0.514</text>
<rect x="822.3" y="470.5" width="349.4" height="204.3" rx="5.5" fill="#1a1a1a"/>
<rect x="822.8" y="471" width="348.4" height="203.3" rx="5" fill="#393939" />
<line x1="822.8" y1="507.8" x2="1171.5" y2="507.8" stroke="#242424" stroke-width="1" />
<line x1="822.8" y1="560.8" x2="1171.5" y2="560.8" stroke="#242424" stroke-width="1" />
<text x="829.5" y="494" font-size="13" fill="#c4c4c4" textLength="101.2" lengthAdjust="spacingAndGlyphs" text-anchor="start" >Position (Sphere)</text>
<rect x="1134.0" y="480.8" width="14" height="14.2" rx="2.5" fill="#1c1c1c" />
<rect x="1134.5" y="481.3" width="13" height="13.4" rx="2" fill="#2a2a2a" />
<rect x="1135.5" y="481.3" width="11" height="1" rx="0" fill="#0c0c0c" />
<path d="M1137.1,488.7 L1139.6,491.1 L1144.9,485.6" fill="none" stroke="#f0f0f0" stroke-width="1.6" stroke-linecap="round" stroke-linejoin="round"/>
<path d="M1154,488.2 L1157.8,491.7 L1161.6,488.2" fill="none" stroke="#8c8c8c" stroke-width="1.5" />
<text x="853.3" y="529" font-size="11.8" fill="#9a9a9a" textLength="77.1" lengthAdjust="spacingAndGlyphs" text-anchor="start" >Position Mode</text>
<rect x="952.7" y="530.6999999999999" width="210.5" height="1.2" rx="0" fill="#2a2a2a" />
<rect x="952.2" y="516.4" width="210.5" height="14.8" rx="2" fill="#525252" />
<text x="955.4000000000001" y="528.1999999999999" font-size="11.6" fill="#d0d0d0" textLength="43.3" lengthAdjust="spacingAndGlyphs" text-anchor="start" >Surface</text>
<polygon points="1149.2,523.1999999999999 1156.7,523.1999999999999 1152.95,527.0" fill="#d0d0d0"/>
<text x="853.3" y="547" font-size="11.8" fill="#9a9a9a" textLength="71.3" lengthAdjust="spacingAndGlyphs" text-anchor="start" >Spawn Mode</text>
<rect x="952.7" y="548.8" width="210.5" height="1.2" rx="0" fill="#2a2a2a" />
<rect x="952.2" y="534.5" width="210.5" height="14.8" rx="2" fill="#525252" />
<text x="955.4000000000001" y="546.3" font-size="11.6" fill="#d0d0d0" textLength="46" lengthAdjust="spacingAndGlyphs" text-anchor="start" >Random</text>
<polygon points="1149.2,541.3 1156.7,541.3 1152.95,545.1" fill="#d0d0d0"/>
<circle cx="835" cy="577" r="4.8" fill="none" stroke="#161212" stroke-width="0.9"/>
<circle cx="835" cy="577" r="3.6" fill="#282828" stroke="#d8d8d8" stroke-width="1.3"/>
<circle cx="835" cy="577" r="2.55" fill="none" stroke="#141414" stroke-width="0.8"/>
<polygon points="843,573.5 851,573.5 847.0,581.7" fill="#646464"/>
<text x="854.2" y="581.3" font-size="11.8" fill="#9a9a9a" textLength="63.2" lengthAdjust="spacingAndGlyphs" text-anchor="start" >Arc Sphere</text>
<rect x="929.6" y="572.2" width="14.8" height="10.8" rx="5.4" fill="none" stroke="#5f5f5f" stroke-width="1.2"/>
<text x="937.3" y="580.6" font-size="8.6" fill="#6a6a6a" font-weight="bold" text-anchor="middle" >L</text>
<circle cx="835" cy="597" r="4.8" fill="none" stroke="#161212" stroke-width="0.9"/>
<circle cx="835" cy="597" r="3.6" fill="#282828" stroke="#d8d8d8" stroke-width="1.3"/>
<circle cx="835" cy="597" r="2.55" fill="none" stroke="#141414" stroke-width="0.8"/>
<line x1="845.5" y1="589.5" x2="845.5" y2="604" stroke="#2a2a2a" stroke-width="1" />
<polygon points="850.5,593.5 858.5,593.5 854.5,601.7" fill="#646464"/>
<text x="862.2" y="601.3" font-size="11.8" fill="#9a9a9a" textLength="40.2" lengthAdjust="spacingAndGlyphs" text-anchor="start" >Sphere</text>
<circle cx="835" cy="617" r="4.8" fill="none" stroke="#161212" stroke-width="0.9"/>
<circle cx="835" cy="617" r="3.6" fill="#282828" stroke="#e6e48a" stroke-width="1.3"/>
<circle cx="835" cy="617" r="2.55" fill="none" stroke="#141414" stroke-width="0.8"/>
<line x1="845.5" y1="609.5" x2="845.5" y2="624.5" stroke="#2a2a2a" stroke-width="1" />
<line x1="854.8" y1="609.5" x2="854.8" y2="624.5" stroke="#2a2a2a" stroke-width="1" />
<polygon points="860,612.5 868,617.0 860,621.5" fill="#646464"/>
<text x="871.6" y="621.3" font-size="11.8" fill="#9a9a9a" textLength="37.1" lengthAdjust="spacingAndGlyphs" text-anchor="start" >Center</text>
<text x="954.7" y="621.2" font-size="12" fill="#7a7a7a" text-anchor="start" >x</text>
<rect x="963.1" y="607.9" width="60.6" height="17.9" rx="2" fill="#2a2a2a" />
<rect x="964.1" y="607.9" width="58.6" height="1" rx="0" fill="#101010" />
<text x="966.3000000000001" y="621.5" font-size="13" fill="#d0d0d0" text-anchor="start" >0</text>
<text x="1028.4" y="621.2" font-size="12" fill="#7a7a7a" text-anchor="start" >y</text>
<rect x="1036.9" y="607.9" width="55.8" height="17.9" rx="2" fill="#2a2a2a" />
<rect x="1037.9" y="607.9" width="53.8" height="1" rx="0" fill="#101010" />
<text x="1040.1000000000001" y="621.5" font-size="13" fill="#d0d0d0" text-anchor="start" >0</text>
<text x="1097" y="621.2" font-size="12" fill="#7a7a7a" text-anchor="start" >z</text>
<rect x="1105" y="607.9" width="58" height="17.9" rx="2" fill="#2a2a2a" />
<rect x="1106" y="607.9" width="56" height="1" rx="0" fill="#101010" />
<text x="1108.2" y="621.5" font-size="13" fill="#d0d0d0" text-anchor="start" >0</text>
<circle cx="835" cy="637" r="4.8" fill="none" stroke="#161212" stroke-width="0.9"/>
<circle cx="835" cy="637" r="3.6" fill="#282828" stroke="#8fe0ee" stroke-width="1.3"/>
<circle cx="835" cy="637" r="2.55" fill="none" stroke="#141414" stroke-width="0.8"/>
<line x1="845.5" y1="629.5" x2="845.5" y2="644.5" stroke="#2a2a2a" stroke-width="1" />
<line x1="854.8" y1="629.5" x2="854.8" y2="644.5" stroke="#2a2a2a" stroke-width="1" />
<text x="871.6" y="641.3" font-size="11.8" fill="#9a9a9a" textLength="36.6" lengthAdjust="spacingAndGlyphs" text-anchor="start" >Radius</text>
<rect x="954.3" y="628.2" width="208.6" height="17.4" rx="2" fill="#2a2a2a" />
<rect x="955.3" y="628.2" width="206.6" height="1" rx="0" fill="#101010" />
<text x="957.5" y="641.3000000000001" font-size="13" fill="#d0d0d0" textLength="27.3" lengthAdjust="spacingAndGlyphs" text-anchor="start" >0.02</text>
<circle cx="835" cy="657" r="4.8" fill="none" stroke="#161212" stroke-width="0.9"/>
<circle cx="835" cy="657" r="3.6" fill="#282828" stroke="#8fe0ee" stroke-width="1.3"/>
<circle cx="835" cy="657" r="2.55" fill="none" stroke="#141414" stroke-width="0.8"/>
<line x1="845.5" y1="649" x2="845.5" y2="665" stroke="#2a2a2a" stroke-width="1" />
<text x="862.2" y="661.3" font-size="11.8" fill="#9a9a9a" textLength="64.1" lengthAdjust="spacingAndGlyphs" text-anchor="start" >Arc (Angle)</text>
<line x1="956" y1="657.9" x2="1115" y2="657.9" stroke="#656565" stroke-width="2" />
<circle cx="1114.9" cy="657.9" r="5.4" fill="#a0a0a0" stroke="none" stroke-width="1"/>
<rect x="1123.4" y="648" width="39.5" height="17.8" rx="2" fill="#2a2a2a" />
<rect x="1124.4" y="648" width="37.5" height="1" rx="0" fill="#101010" />
<text x="1126.7" y="661.5" font-size="13" fill="#d0d0d0" textLength="35.2" lengthAdjust="spacingAndGlyphs" text-anchor="start" >6.283</text>
<rect x="822.3" y="677.5" width="349.4" height="61" rx="5.5" fill="#1a1a1a"/>
<rect x="822.8" y="678" width="348.4" height="60" rx="5" fill="#393939" />
<line x1="822.8" y1="715.8" x2="1171.5" y2="715.8" stroke="#242424" stroke-width="1" />
<text x="829.5" y="701.1" font-size="13" fill="#c4c4c4" textLength="186.9" lengthAdjust="spacingAndGlyphs" text-anchor="start" >Set Lifetime Random (Uniform)</text>
<rect x="1134.0" y="688.3" width="14" height="14.2" rx="2.5" fill="#1c1c1c" />
<rect x="1134.5" y="688.8" width="13" height="13.4" rx="2" fill="#2a2a2a" />
<rect x="1135.5" y="688.8" width="11" height="1" rx="0" fill="#0c0c0c" />
<path d="M1137.1,696.1999999999999 L1139.6,698.5999999999999 L1144.9,693.0999999999999" fill="none" stroke="#f0f0f0" stroke-width="1.6" stroke-linecap="round" stroke-linejoin="round"/>
<path d="M1154,695.5 L1157.8,699.0 L1161.6,695.5" fill="none" stroke="#8c8c8c" stroke-width="1.5" />
<line x1="433" y1="566" x2="439" y2="566" stroke="#1e4c3a" stroke-width="2.2" />
<line x1="816.5" y1="92" x2="824" y2="92" stroke="#1e5842" stroke-width="2.2" />
<line x1="824" y1="92" x2="831.5" y2="92" stroke="#2a4a3e" stroke-width="2.0" /></svg>
</body></html>
